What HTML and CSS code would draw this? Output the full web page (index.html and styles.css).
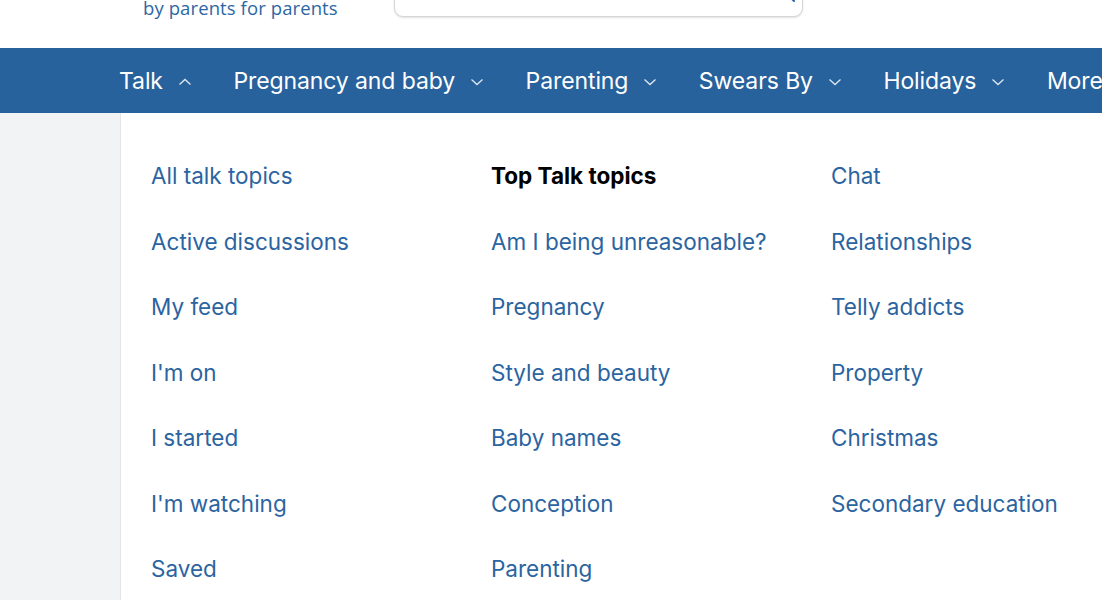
FILE: index.html
```html
<!DOCTYPE html>
<html lang="en">
<head>
  <meta charset="UTF-8">
  <meta name="viewport" content="width=device-width, initial-scale=1.0">
  <title>Mumsnet Talk</title>
  <link rel="stylesheet" href="styles.css">
</head>
<body>

<header class="site-header">
  <div class="logo">
    <span class="tagline">by parents for parents</span>
  </div>
  <div class="search-box">
    <svg class="search-icon" width="20" height="20" viewBox="0 0 20 20" fill="none" stroke="#2b64a0" stroke-width="2" stroke-linecap="round">
      <circle cx="8.5" cy="8.5" r="6"/>
      <line x1="13" y1="13" x2="18" y2="18"/>
    </svg>
  </div>
</header>

<nav class="main-nav">
  <a class="nav-item" href="#">Talk
    <svg class="chevron" width="14" height="8" viewBox="0 0 14 8"><polyline points="1.5,6.5 7,1.5 12.5,6.5"/></svg>
  </a>
  <a class="nav-item" href="#">Pregnancy and baby
    <svg class="chevron" width="14" height="8" viewBox="0 0 14 8"><polyline points="1.5,1.5 7,6.5 12.5,1.5"/></svg>
  </a>
  <a class="nav-item" href="#">Parenting
    <svg class="chevron" width="14" height="8" viewBox="0 0 14 8"><polyline points="1.5,1.5 7,6.5 12.5,1.5"/></svg>
  </a>
  <a class="nav-item" href="#">Swears By
    <svg class="chevron" width="14" height="8" viewBox="0 0 14 8"><polyline points="1.5,1.5 7,6.5 12.5,1.5"/></svg>
  </a>
  <a class="nav-item" href="#">Holidays
    <svg class="chevron" width="14" height="8" viewBox="0 0 14 8"><polyline points="1.5,1.5 7,6.5 12.5,1.5"/></svg>
  </a>
  <a class="nav-item" href="#">More
    <svg class="chevron" width="14" height="8" viewBox="0 0 14 8"><polyline points="1.5,1.5 7,6.5 12.5,1.5"/></svg>
  </a>
</nav>

<div class="page">
  <aside class="side"></aside>
  <div class="dropdown">
    <ul class="link-col">
      <li><a href="#">All talk topics</a></li>
      <li><a href="#">Active discussions</a></li>
      <li><a href="#">My feed</a></li>
      <li><a href="#">I'm on</a></li>
      <li><a href="#">I started</a></li>
      <li><a href="#">I'm watching</a></li>
      <li><a href="#">Saved</a></li>
    </ul>
    <ul class="link-col">
      <li class="col-title">Top Talk topics</li>
      <li><a href="#">Am I being unreasonable?</a></li>
      <li><a href="#">Pregnancy</a></li>
      <li><a href="#">Style and beauty</a></li>
      <li><a href="#">Baby names</a></li>
      <li><a href="#">Conception</a></li>
      <li><a href="#">Parenting</a></li>
    </ul>
    <ul class="link-col">
      <li><a href="#">Chat</a></li>
      <li><a href="#">Relationships</a></li>
      <li><a href="#">Telly addicts</a></li>
      <li><a href="#">Property</a></li>
      <li><a href="#">Christmas</a></li>
      <li><a href="#">Secondary education</a></li>
    </ul>
  </div>
</div>

</body>
</html>
```

FILE: styles.css
```css
body {
  margin: 0;
  font-family: Inter, "Noto Sans", Arial, sans-serif;
  background: #ffffff;
  overflow: hidden;
}
.site-header {
  height: 48px;
  display: flex;
  align-items: flex-start;
  overflow: hidden;
  background: #fff;
}
.logo {
  margin-left: 143px;
  width: 251px;
  margin-top: -5px;
}
.tagline {
  font-family: "Open Sans", "Noto Sans", sans-serif;
  font-size: 18.5px;
  line-height: 26px;
  color: #2d67a3;
  letter-spacing: 0.1px;
}
.search-box {
  position: relative;
  width: 407px;
  height: 50px;
  margin-top: -35px;
  border: 1px solid #d4d6da;
  border-radius: 9px;
  box-shadow: 0 1px 2px rgba(0, 0, 0, 0.12);
  background: #fff;
}
.search-icon {
  position: absolute;
  right: 6px;
  top: 17px;
}
.main-nav {
  height: 65px;
  background: #28629c;
  display: flex;
  align-items: center;
  padding-left: 119px;
  gap: 41.5px;
  white-space: nowrap;
}
.nav-item {
  display: flex;
  align-items: center;
  gap: 15px;
  color: #fff;
  text-decoration: none;
  font-size: 23px;
  letter-spacing: -0.1px;
}
.chevron {
  fill: none;
  stroke: rgba(255, 255, 255, 0.85);
  stroke-width: 1.3;
  margin-top: 2px;
}
.page {
  display: flex;
  height: 487px;
}
.side {
  width: 120px;
  background: #f2f3f5;
  border-right: 1px solid #e3e5e8;
}
.dropdown {
  flex: 1;
  display: grid;
  grid-template-columns: 340px 340px 1fr;
  padding: 30px 0 0 30px;
  background: #fff;
}
.link-col {
  list-style: none;
  margin: 0;
  padding: 0;
}
.link-col li {
  height: 65.5px;
  line-height: 66px;
  font-size: 22.5px;
  white-space: nowrap;
}
.link-col a {
  color: #2b64a0;
  text-decoration: none;
}
.col-title {
  font-weight: 700;
  color: #000;
}
```
